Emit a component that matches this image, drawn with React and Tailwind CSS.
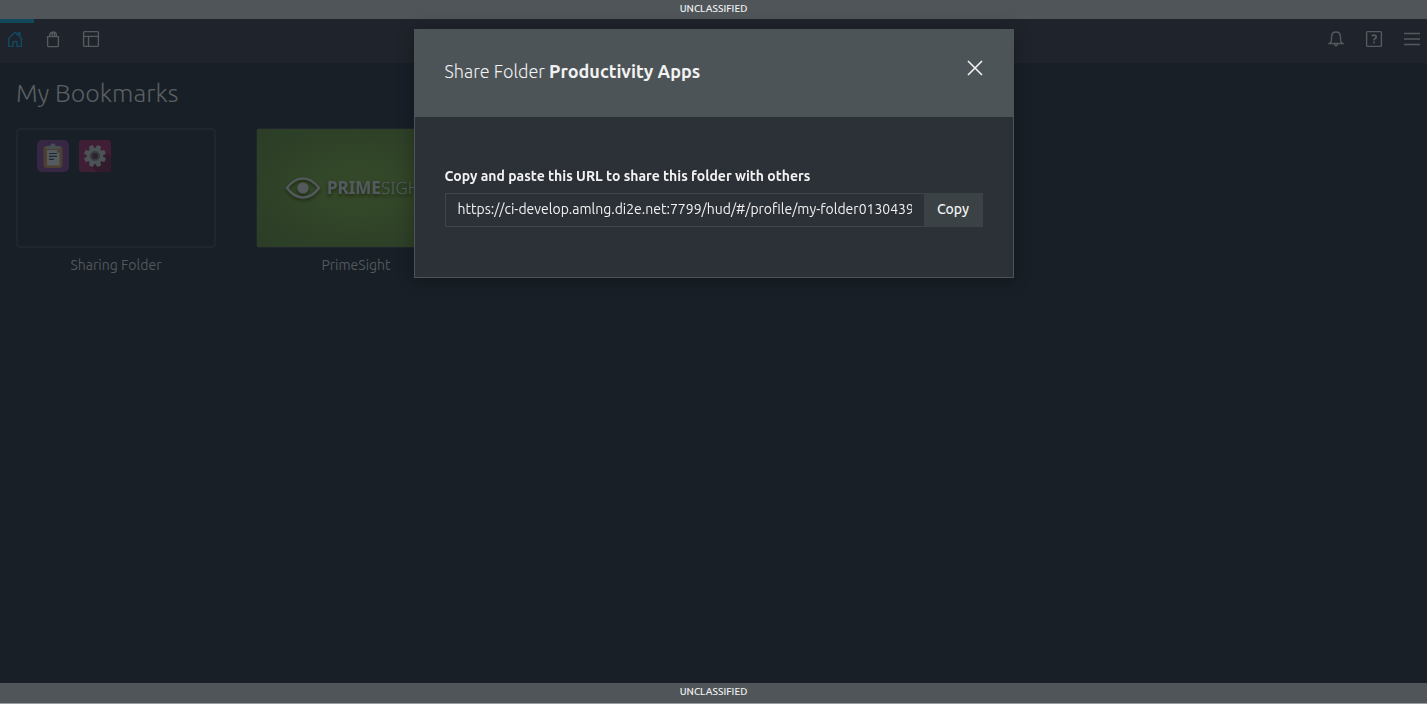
import { useRef } from "react";

function Banner({ className }) {
  return (
    <div className={`flex shrink-0 items-center justify-center bg-[#4f5558] pb-0.5 text-[10px] leading-none font-medium text-[#f2f2f2] ${className}`}>
      UNCLASSIFIED
    </div>
  );
}

function Icon({ children }) {
  return (
    <svg viewBox="0 0 18 18" className="size-[18px]" fill="none" stroke="currentColor" strokeWidth="1.4" aria-hidden="true">
      {children}
    </svg>
  );
}

function NavButton({ label, active, children }) {
  return (
    <button
      type="button"
      aria-label={label}
      className={`flex h-11 items-center border-t-4 pb-2 ${active ? "border-[#12485c] pr-2.5 pl-1.5 text-[#124a60]" : "border-transparent px-2.5 text-[#555a5e]"}`}
    >
      {children}
    </button>
  );
}

function TopBar() {
  return (
    <header className="flex h-11 shrink-0 justify-between bg-[#1f232b]">
      <nav className="flex">
        <NavButton label="Home" active>
          <Icon>
            <path d="M2.7 8.9V16.4H7V11.6H11V16.4H15.3V8.9M1.7 9.6L9 2.2L12.2 5.4V3H14V7.2L16.3 9.6" />
          </Icon>
        </NavButton>
        <NavButton label="Store">
          <Icon>
            <path d="M3.6 6.6H14.4V15.4Q14.4 16.6 13.2 16.6H4.8Q3.6 16.6 3.6 15.4Z" />
            <path d="M5.6 6.6V5.4Q5.8 2.8 8 2.2M8.2 6.6V4.6Q8.4 2 10 2Q12.4 2.4 12.4 5.4V6.6M8 2.2Q10.4 1.8 10.4 4.6V6.6" />
          </Icon>
        </NavButton>
        <NavButton label="Layouts">
          <Icon>
            <rect x="1.6" y="1.6" width="14.8" height="14.8" rx="1" />
            <path d="M1.6 6.4H16.4M6.5 6.4V16.4" />
          </Icon>
        </NavButton>
      </nav>
      <div className="flex">
        <NavButton label="Notifications">
          <Icon>
            <path d="M1.2 13.5H16.8M3 13.5Q4.6 11.5 4.6 8V6.8Q4.6 2 9 2Q13.4 2 13.4 6.8V8Q13.4 11.5 15 13.5M7.6 13.8Q7.6 15.7 9 15.7Q10.4 15.7 10.4 13.8" />
          </Icon>
        </NavButton>
        <NavButton label="Help">
          <Icon>
            <rect x="1.6" y="1.6" width="14.8" height="14.8" rx="1" />
            <path d="M6.8 6Q7.6 5.2 9 5.2Q11.2 5.2 11.2 7Q11.2 8.1 9.9 8.8Q9 9.3 9 10.5M9 11.7V13.3" strokeWidth="1.8" />
          </Icon>
        </NavButton>
        <button type="button" aria-label="Menu" className="flex items-center pr-1.5 pb-1 pl-2.5 text-[#555a5e]">
          <Icon>
            <path d="M1 3.5H17M1 9H17M1 14.5H17" strokeWidth="1.5" />
          </Icon>
        </button>
      </div>
    </header>
  );
}

function ClipboardApp() {
  return (
    <svg viewBox="0 0 32 32" className="size-8" aria-hidden="true">
      <rect width="32" height="32" rx="5" fill="#362744" />
      <rect x="6.5" y="6" width="19" height="22" rx="3" fill="#4d4030" />
      <path d="M10 10H20L22.5 12.5V25.5H10Z" fill="#555b60" />
      <path d="M20 10L22.5 12.5H20Z" fill="#3d4348" />
      <path d="M9 9V7.5Q9 6 10.5 6H13.5V5Q13.5 3.6 16 3.6Q18.5 3.6 18.5 5V6H21.5Q23 6 23 7.5V9Z" fill="#474f53" />
      <path d="M12 13.5H20M12 16.4H20M12 19.3H17" stroke="#20292f" strokeWidth="1.2" />
    </svg>
  );
}

function GearApp() {
  return (
    <svg viewBox="0 0 32 32" className="size-8" aria-hidden="true">
      <rect width="32" height="32" rx="3" fill="#401e35" />
      <path d="M25 11L32 17V29Q32 32 29 32H18L9.5 24Z" fill="#321b2b" />
      <g fill="#4c5356">
        <circle cx="16" cy="16" r="8" />
        {[22.5, 67.5, 112.5, 157.5, 202.5, 247.5, 292.5, 337.5].map((angle) => (
          <path key={angle} d="M13.2 9.5L14 5H18L18.8 9.5Z" transform={`rotate(${angle} 16 16)`} />
        ))}
      </g>
      <circle cx="16" cy="16" r="4" fill="#2f2230" stroke="#353c41" strokeWidth="2.2" />
    </svg>
  );
}

function PrimeSightArt() {
  return (
    <svg viewBox="0 0 200 120" className="block w-full" role="img" aria-label="PrimeSight">
      <defs>
        <radialGradient id="meadow" cx="50%" cy="50%" r="65%">
          <stop offset="0" stopColor="#354a29" />
          <stop offset="1" stopColor="#2c3e27" />
        </radialGradient>
        <filter id="drop" x="-10%" y="-30%" width="120%" height="180%">
          <feDropShadow dx="0" dy="2" stdDeviation="1.5" floodColor="#17210f" floodOpacity="0.8" />
        </filter>
      </defs>
      <rect x="1" y="1" width="198" height="118" fill="url(#meadow)" />
      <rect x="0.5" y="0.5" width="199" height="119" rx="2" fill="none" stroke="#20252e" />
      <g filter="url(#drop)">
        <path d="M31 60Q38 50.5 47 50.5Q56 50.5 63 60Q56 69.5 47 69.5Q38 69.5 31 60Z" fill="none" stroke="#535a5d" strokeWidth="2.2" />
        <circle cx="47" cy="60" r="5.6" fill="#535a5d" />
        <text x="71" y="66" fontSize="17" fill="#535a5e" fontFamily="Noto Sans, sans-serif">
          <tspan fontWeight="700">PRIME</tspan>
          <tspan fontWeight="300">SIGHT</tspan>
        </text>
      </g>
    </svg>
  );
}

function Bookmark({ label, children }) {
  return (
    <li className="w-[200px]">
      <a href="#bookmark" className="block text-center text-sm leading-5 text-[#53585c]">
        {children}
        <span className="mt-[7px] block">{label}</span>
      </a>
    </li>
  );
}

function ShareDialog() {
  const urlField = useRef(null);
  return (
    <div className="fixed inset-x-0 top-[29px] flex justify-center px-4">
      <section
        role="dialog"
        aria-modal="true"
        aria-labelledby="share-title"
        className="w-full max-w-[600px] border border-[#4d5457] bg-[#2c3037] text-[#f2f2f2] shadow-[0_2px_16px_rgba(0,0,0,0.3)]"
      >
        <header className="flex items-start justify-between bg-[#4d5457] px-[30px] pt-[27px] pb-8">
          <h2 id="share-title" className="text-lg leading-7 font-light">
            Share Folder <strong className="font-bold">Productivity Apps</strong>
          </h2>
          <button type="button" aria-label="Close" className="pt-[3px]">
            <svg viewBox="0 0 16 16" className="size-4" stroke="currentColor" strokeWidth="1.6" aria-hidden="true">
              <path d="M1 1L15 15M15 1L1 15" />
            </svg>
          </button>
        </header>
        <div className="px-[30px] pt-[49px] pb-[50px]">
          <label htmlFor="share-url" className="block text-sm leading-5 font-bold">
            Copy and paste this URL to share this folder with others
          </label>
          <div className="mt-[7px] flex h-[34px]">
            <input
              id="share-url"
              ref={urlField}
              readOnly
              defaultValue="https://ci-develop.amlng.di2e.net:7799/hud/#/profile/my-folder0130439482"
              className="min-w-0 flex-1 border border-r-0 border-[#3f4548] bg-transparent px-3 pb-0.5 text-sm outline-none"
            />
            <button type="button" onClick={() => urlField.current.select()} className="w-[59px] bg-[#3b4245] pb-0.5 text-sm font-medium">
              Copy
            </button>
          </div>
        </div>
      </section>
    </div>
  );
}

export default function App() {
  return (
    <div className="flex min-h-screen flex-col border-b border-[#9a9da0] bg-[#181f26] font-['Ubuntu','Noto_Sans',sans-serif]">
      <Banner className="h-[19px]" />
      <TopBar />
      <main className="flex-1 px-4 pt-3">
        <h1 className="text-[25px] leading-9 font-light text-[#5a5f63]">My Bookmarks</h1>
        <ul className="mt-[17px] flex flex-wrap gap-10">
          <Bookmark label="Sharing Folder">
            <div className="flex h-[120px] gap-2.5 rounded border-2 border-[#20252e] px-[19px] py-2.5">
              <ClipboardApp />
              <GearApp />
            </div>
          </Bookmark>
          <Bookmark label="PrimeSight">
            <PrimeSightArt />
          </Bookmark>
        </ul>
      </main>
      <Banner className="h-5" />
      <ShareDialog />
    </div>
  );
}
